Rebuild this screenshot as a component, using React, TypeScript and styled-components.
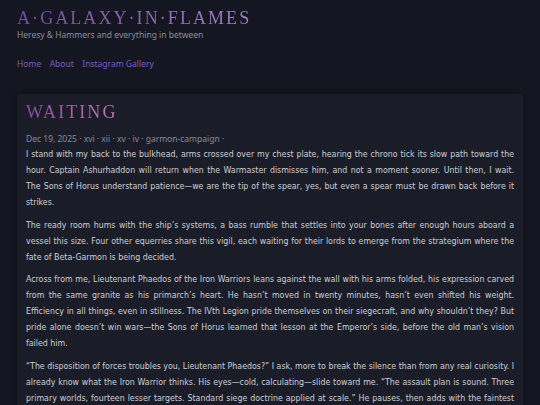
import React from "react";
import styled, { createGlobalStyle } from "styled-components";

const GlobalStyle = createGlobalStyle`
  html, body {
    margin: 0;
    padding: 0;
    background: #141721;
  }
  body {
    font-family: "Noto Sans", "Open Sans", sans-serif;
    color: #c9cbd1;
  }
`;

const Page = styled.div`
  padding: 8px 17px 24px;
  min-height: 100vh;
  box-sizing: border-box;
`;

const Header = styled.header`
  display: flex;
  flex-direction: column;
  align-items: flex-start;
`;

const GradientTitle = styled.h1<{ $from: string; $to: string }>`
  display: inline-block;
  margin: 0;
  font-family: "Liberation Serif", "Times New Roman", serif;
  font-weight: 400;
  font-size: 18px;
  letter-spacing: 0.115em;
  text-transform: uppercase;
  background: linear-gradient(90deg, ${(p) => p.$from}, ${(p) => p.$to});
  -webkit-background-clip: text;
  background-clip: text;
  color: transparent;
`;

const Tagline = styled.p`
  margin: 0;
  font-size: 8.5px;
  line-height: 12px;
  color: #8a8f99;
`;

const Nav = styled.nav`
  display: flex;
  gap: 8.5px;
  margin: 17px 0 0;
`;

const NavLink = styled.a`
  font-size: 8.5px;
  line-height: 12px;
  color: #7d5cc4;
  text-decoration: none;
`;

const Card = styled.article`
  margin-top: 24px;
  background: #1a1d28;
  border-radius: 3px;
  padding: 7px 9px 12px;
  box-shadow: 0 0 10px rgba(0, 0, 0, 0.35);
`;

const Meta = styled.div`
  margin-top: 9px;
  font-size: 8.5px;
  line-height: 14px;
  color: #878b96;
`;

const Body = styled.div`
  font-family: "DejaVu Sans Condensed", "Noto Sans", sans-serif;
  font-size: 8.75px;
  line-height: 16px;
  text-align: justify;
  color: #cdcfd5;

  p {
    margin: 0 0 6.5px;
  }
`;

const tags = ["xvi", "xii", "xv", "iv", "garmon-campaign"];

const paragraphs = [
  "I stand with my back to the bulkhead, arms crossed over my chest plate, hearing the chrono tick its slow path toward the hour. Captain Ashurhaddon will return when the Warmaster dismisses him, and not a moment sooner. Until then, I wait. The Sons of Horus understand patience\u2014we are the tip of the spear, yes, but even a spear must be drawn back before it strikes.",
  "The ready room hums with the ship\u2019s systems, a bass rumble that settles into your bones after enough hours aboard a vessel this size. Four other equerries share this vigil, each waiting for their lords to emerge from the strategium where the fate of Beta-Garmon is being decided.",
  "Across from me, Lieutenant Phaedos of the Iron Warriors leans against the wall with his arms folded, his expression carved from the same granite as his primarch\u2019s heart. He hasn\u2019t moved in twenty minutes, hasn\u2019t even shifted his weight. Efficiency in all things, even in stillness. The IVth Legion pride themselves on their siegecraft, and why shouldn\u2019t they? But pride alone doesn\u2019t win wars\u2014the Sons of Horus learned that lesson at the Emperor\u2019s side, before the old man\u2019s vision failed him.",
  "\u201CThe disposition of forces troubles you, Lieutenant Phaedos?\u201D I ask, more to break the silence than from any real curiosity. I already know what the Iron Warrior thinks. His eyes\u2014cold, calculating\u2014slide toward me. \u201CThe assault plan is sound. Three primary worlds, fourteen lesser targets. Standard siege doctrine applied at scale.\u201D He pauses, then adds with the faintest edge, \u201CThough I question the deployment of certain legions to critical theaters.\u201D",
];

export default function App() {
  return (
    <>
      <GlobalStyle />
      <Page>
        <Header>
          <GradientTitle $from="#774a9c" $to="#a27fc2">
            A·Galaxy·In·Flames
          </GradientTitle>
          <Tagline>Heresy &amp; Hammers and everything in between</Tagline>
          <Nav>
            <NavLink href="#">Home</NavLink>
            <NavLink href="#">About</NavLink>
            <NavLink href="#">Instagram Gallery</NavLink>
          </Nav>
        </Header>
        <Card>
          <GradientTitle as="h2" $from="#874c9e" $to="#c873b0">
            Waiting
          </GradientTitle>
          <Meta>
            Dec 19, 2025 · {tags.map((t) => `${t} · `).join("")}
          </Meta>
          <Body>
            {paragraphs.map((p, i) => (
              <p key={i}>{p}</p>
            ))}
          </Body>
        </Card>
      </Page>
    </>
  );
}
